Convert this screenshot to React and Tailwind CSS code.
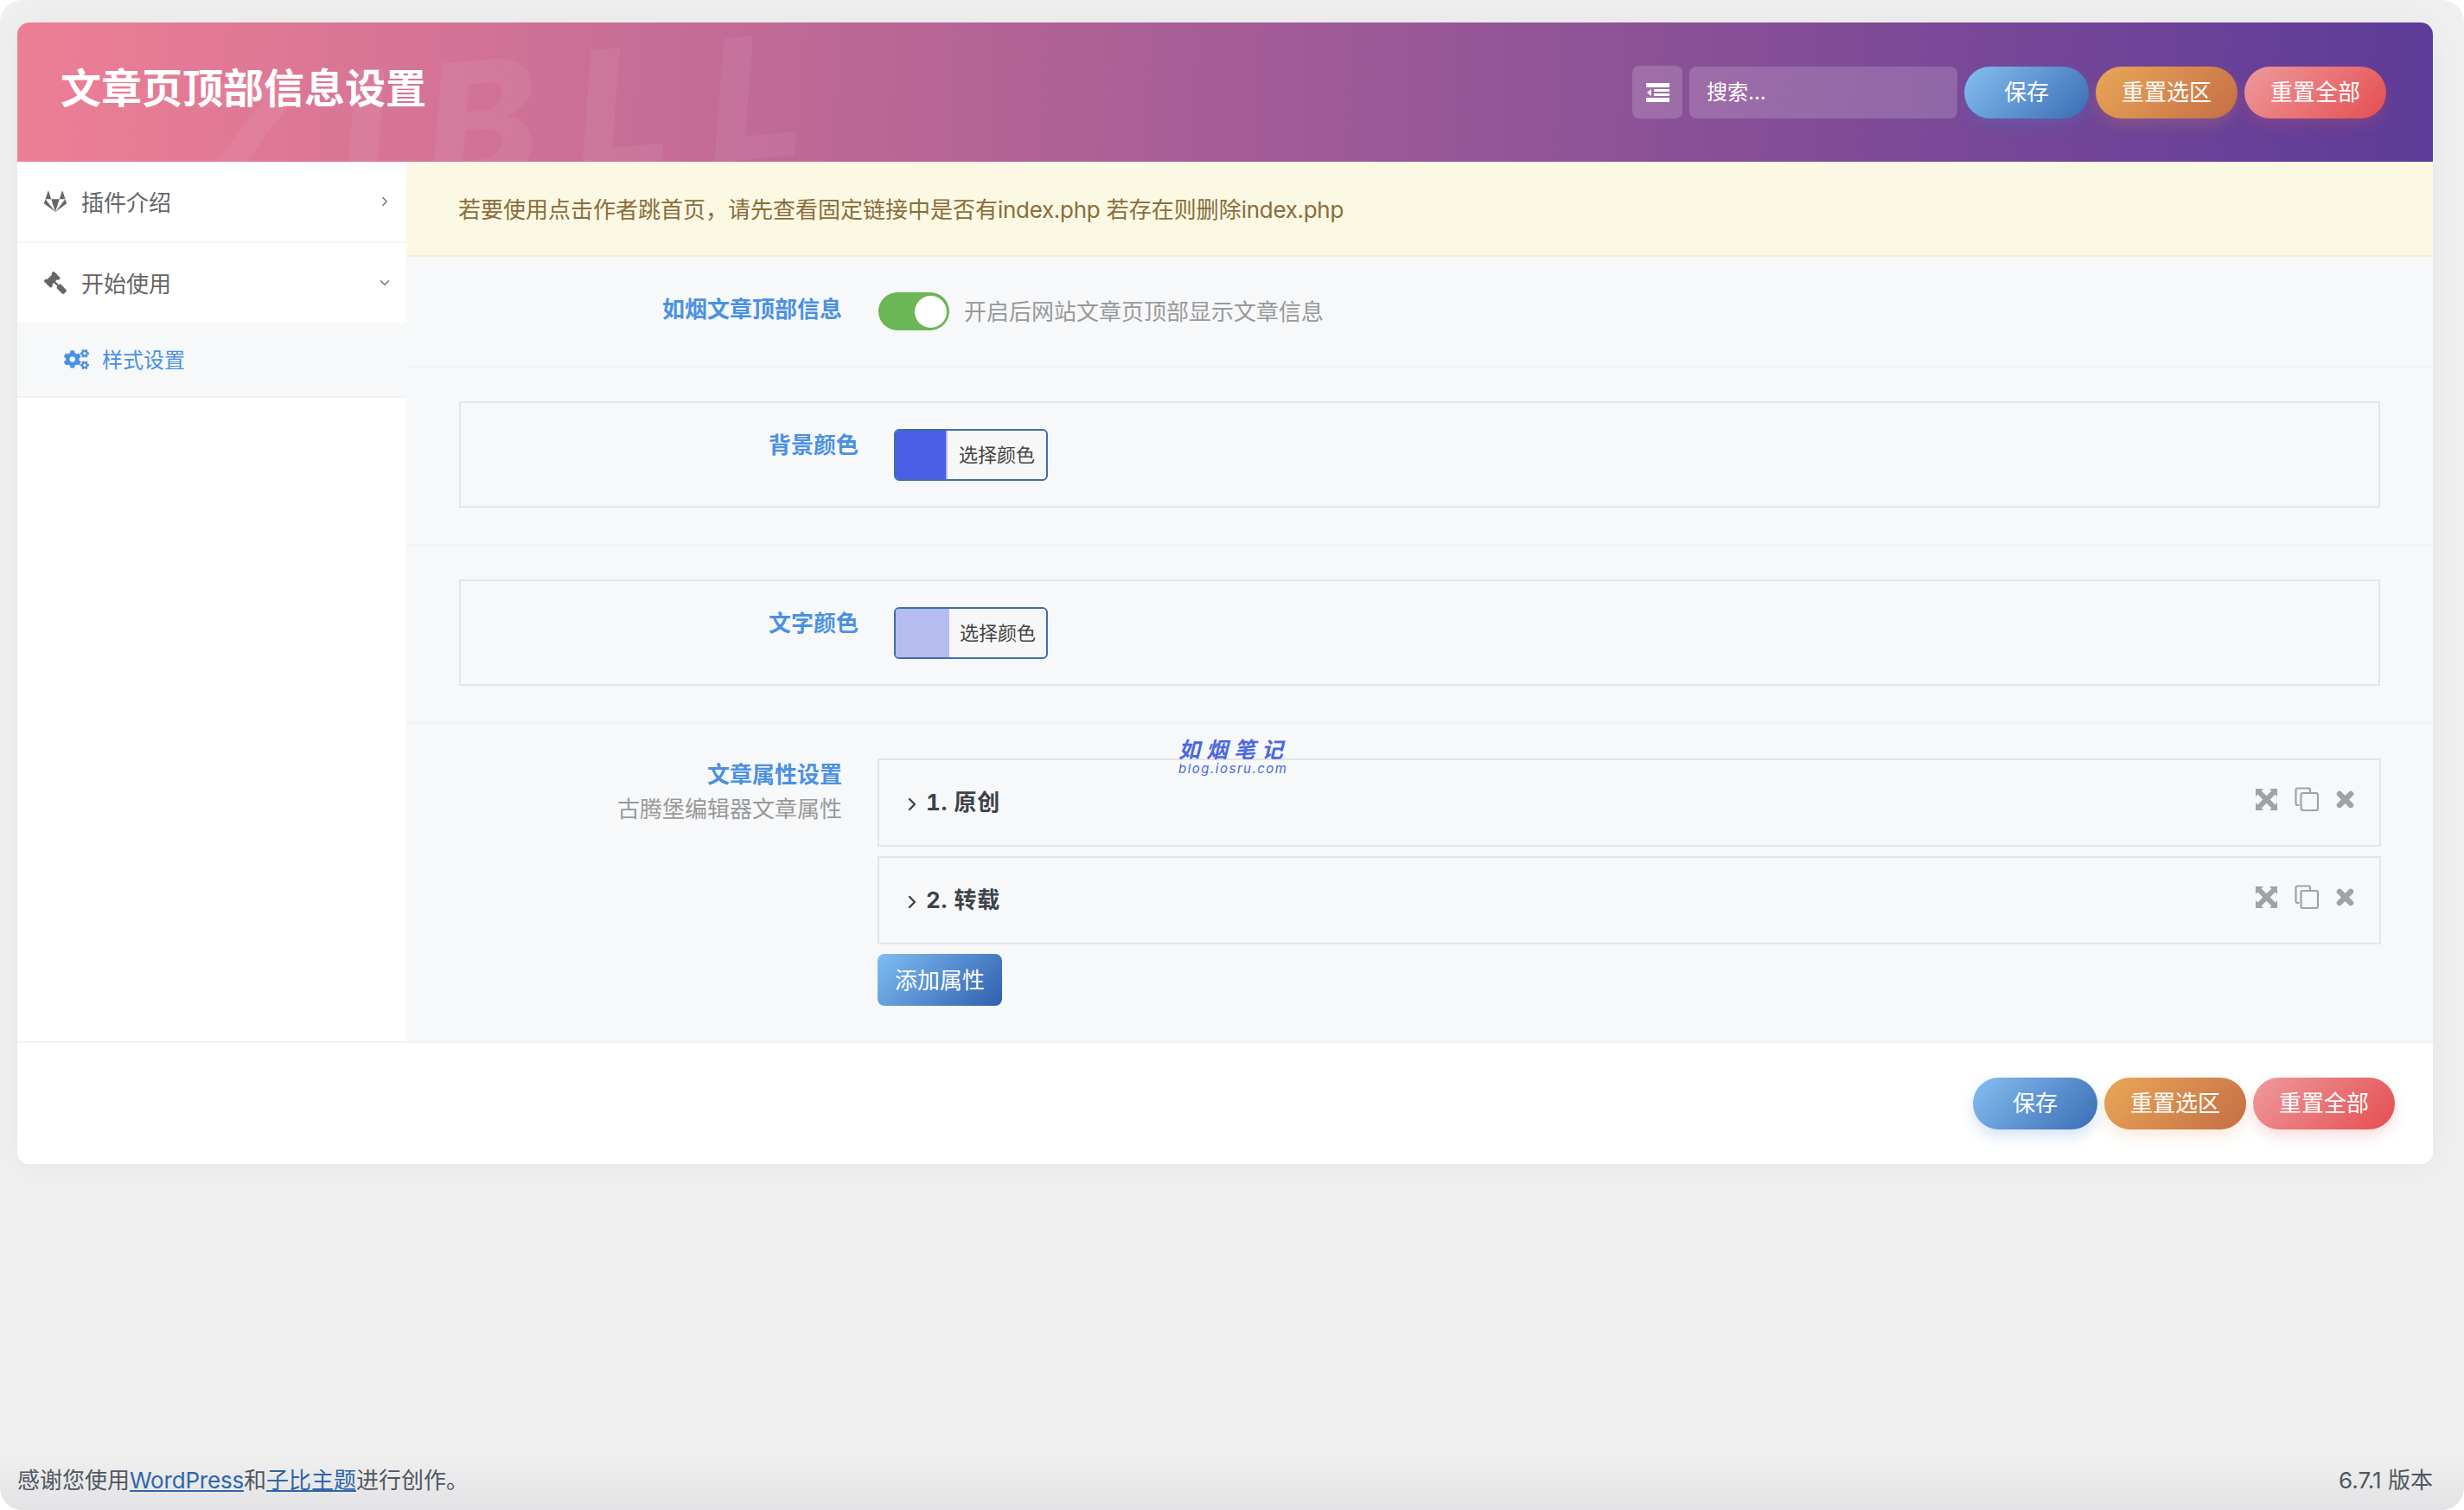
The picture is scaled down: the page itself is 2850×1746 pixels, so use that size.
import React from 'react';
import { ChevronRight, ChevronDown } from 'lucide-react';
import { FaGitlab, FaGavel, FaCogs } from 'react-icons/fa';

const actionBtn = 'h-[60px] rounded-[30px] text-white text-[26px] leading-[60px] text-center';

const ActionButtons = () => (
  <div className="flex gap-[8px]">
    <button className={`${actionBtn} w-[144px] bg-[linear-gradient(135deg,#85bff0,#3a6cb4)] shadow-[0_8px_16px_rgba(70,130,210,0.22)]`}>保存</button>
    <button className={`${actionBtn} w-[164px] bg-[linear-gradient(135deg,#e9a757,#c56e46)] shadow-[0_8px_16px_rgba(225,150,80,0.2)]`}>重置选区</button>
    <button className={`${actionBtn} w-[164px] bg-[linear-gradient(135deg,#ee9a9c,#e54e50)] shadow-[0_8px_16px_rgba(225,90,90,0.2)]`}>重置全部</button>
  </div>
);

const OutdentIcon = () => (
  <svg width="27" height="22" viewBox="0 0 27 22" fill="#fff">
    <rect width="27" height="5" />
    <rect x="9" y="7" width="18" height="3" />
    <rect x="9" y="12" width="18" height="3" />
    <path d="M1 11l5-4v8z" />
    <rect y="17" width="27" height="5" />
  </svg>
);

const ExpandIcon = () => (
  <svg width="25" height="25" viewBox="0 0 25 25" fill="#a0a2a5">
    <path d="M0 0h9L6.6 2.4 12.5 8.3 18.4 2.4 16 0h9v9l-2.4-2.4-5.9 5.9 5.9 5.9L25 16v9h-9l2.4-2.4-5.9-5.9-5.9 5.9L9 25H0v-9l2.4 2.4 5.9-5.9-5.9-5.9L0 9z" />
  </svg>
);

const CloseIcon = () => (
  <svg width="21" height="21" viewBox="0 0 21 21" fill="none" stroke="#a0a2a5" strokeWidth="6.5" strokeLinecap="round">
    <path d="M4 4l13 13M17 4L4 17" />
  </svg>
);

const CopyIcon = () => (
  <svg width="28" height="28" viewBox="0 0 28 28" fill="none" stroke="#a0a2a5" strokeWidth="2.2">
    <path d="M5.5 21H3.5a2 2 0 0 1-2-2V3.5a2 2 0 0 1 2-2H16a2 2 0 0 1 2 2v2.5" />
    <rect x="7.5" y="7" width="19.5" height="20" rx="2" />
  </svg>
);

const ColorBox = ({ label, swatch }) => (
  <div className="h-[206px] border-t-2 border-[#f1f2f3] px-[61px] pt-[39px]">
    <div className="h-[123px] border-2 border-[#e3e5e7] flex items-start pt-[30px]">
      <div className="w-[460px] text-right text-[26px] font-bold leading-[36px] text-[#4a90e2] pt-[1px]">{label}</div>
      <div className="ml-[41px] w-[178px] h-[60px] rounded-[6px] border-2 border-[#3f6fa8] flex overflow-hidden bg-[#f7f7f7]">
        {swatch}
        <div className="flex-1 text-center text-[22px] leading-[56px] text-[#444]">选择颜色</div>
      </div>
    </div>
  </div>
);

const GroupItem = ({ title }) => (
  <div className="h-[102px] border-2 border-[#e3e5e7] flex items-start justify-between pl-[29px] pr-[29px] pt-[31px]">
    <div className="flex items-center text-[26px] font-bold leading-[36px] text-[#3c434a]">
      <ChevronRight size={24} strokeWidth={2.4} className="mr-[4px] mt-[4px] -ml-[3px]" />
      <span className="tracking-[0.6px] tabular-nums">{title}</span>
    </div>
    <div className="flex items-center">
      <ExpandIcon />
      <span className="ml-[20px]"><CopyIcon /></span>
      <span className="ml-[20px]"><CloseIcon /></span>
    </div>
  </div>
);

export default function App() {
  return (
    <div className="bg-white">
      <div className="relative h-[1746px] rounded-[26px] flex flex-col bg-[linear-gradient(to_bottom,#f0f0f1_96%,#e3e3e5)] font-[Inter,'Noto_Sans_CJK_SC',sans-serif] text-[#3c434a]">
        {/* card */}
        <div className="relative ml-[20px] mr-[36px] mt-[26px] h-[1320px] rounded-[14px] bg-white shadow-[0_0_40px_rgba(0,0,0,0.05)] flex flex-col overflow-hidden">
          {/* header */}
          <div className="relative h-[161px] shrink-0 overflow-hidden flex items-center justify-between pl-[50px] pr-[54px] bg-[linear-gradient(92deg,#ed7f95,#5d3b98)]">
            <div className="absolute left-[195px] top-[14px] text-[195px] font-extrabold italic leading-none tracking-[44px] text-white/[0.06] -rotate-[5deg] select-none" aria-hidden="true">ZIBLL</div>
            <h1 className="relative text-[47px] font-bold leading-[60px] text-white pb-[9px]">文章页顶部信息设置</h1>
            <div className="relative flex items-center gap-[8px]">
              <div className="w-[58px] h-[61px] rounded-[8px] bg-white/[0.17] flex items-center justify-center">
                <OutdentIcon />
              </div>
              <input
                placeholder="搜索..."
                className="w-[310px] h-[60px] rounded-[8px] bg-white/[0.17] px-[20px] text-[24px] text-white placeholder:text-white outline-none"
              />
              <ActionButtons />
            </div>
          </div>

          <div className="flex-1 flex min-h-0">
            {/* sidebar */}
            <div className="w-[450px] shrink-0 bg-white">
              <div className="h-[94px] border-b-2 border-[#f3f4f5] flex items-center pl-[31px] pr-[16px] text-[#666] text-[26px]">
                <FaGitlab size={26} />
                <span className="ml-[17px] flex-1 pt-[2px]">插件介绍</span>
                <ChevronRight size={18} strokeWidth={1.6} />
              </div>
              <div className="h-[92px] flex items-center pl-[31px] pr-[16px] text-[#666] text-[26px]">
                <FaGavel size={26} className="-scale-x-100" />
                <span className="ml-[17px] flex-1 pt-[2px]">开始使用</span>
                <ChevronDown size={18} strokeWidth={1.6} />
              </div>
              <div className="h-[87px] bg-[#f6f8fa] border-b-2 border-[#f1f2f3] flex items-center pl-[54px] text-[#4a90e2] text-[24px]">
                <FaCogs size={29} />
                <span className="ml-[15px] pt-[2px]">样式设置</span>
              </div>
            </div>

            {/* main */}
            <div className="flex-1 bg-[#f6f8fa] flex flex-col">
              <div className="h-[110px] bg-[#fbf8e3] border-b-2 border-[#f9ecd4] pl-[60px] pt-[2px] flex items-center text-[26px] text-[#8a6d3b]">
                <div>
                  若要使用点击作者跳首页，请先查看固定链接中是否有<span className="tracking-[-0.3px]">index.php</span> 若存在则删除<span className="tracking-[-0.3px]">index.php</span>
                </div>
              </div>

              <div className="h-[126px] flex items-start pl-[61px] pt-[41px]">
                <div className="w-[443px] pt-[2px] text-right text-[26px] font-bold leading-[36px] text-[#4a90e2]">如烟文章顶部信息</div>
                <div className="ml-[42px] w-[82px] h-[44px] rounded-[22px] bg-[#6bb655] flex items-center justify-end pr-[3px]">
                  <div className="w-[37px] h-[37px] rounded-full bg-white" />
                </div>
                <div className="ml-[17px] text-[26px] leading-[46px] text-[#999]">开启后网站文章页顶部显示文章信息</div>
              </div>

              <ColorBox label="背景颜色" swatch={<div className="w-[60px] bg-[#4a5de6] border-r-[2px] border-[#b4bcf0]" />} />
              <ColorBox label="文字颜色" swatch={<div className="w-[62px] bg-[#b4bcf0]" />} />

              <div className="flex-1 border-t-2 border-[#f1f2f3] flex items-start pl-[61px] pr-[60px] pt-[40px]">
                <div className="w-[443px] pt-[1px] text-right">
                  <div className="text-[26px] font-bold leading-[36px] text-[#4a90e2]">文章属性设置</div>
                  <div className="mt-[2px] text-[26px] leading-[40px] text-[#999]">古腾堡编辑器文章属性</div>
                </div>
                <div className="ml-[41px] flex-1 flex flex-col">
                  <GroupItem title="1. 原创" />
                  <div className="h-[11px]" />
                  <GroupItem title="2. 转载" />
                  <button className="mt-[11px] w-[144px] h-[60px] rounded-[8px] text-white text-[26px] bg-[linear-gradient(135deg,#7fbdf2,#2f5fae)]">添加属性</button>
                </div>
              </div>
            </div>
          </div>

          {/* card footer */}
          <div className="h-[142px] shrink-0 border-t-2 border-[#f1f2f3] bg-white flex justify-end items-start pt-[40px] pr-[44px]">
            <ActionButtons />
          </div>

          {/* pasted watermark */}
          <div className="absolute left-[1343px] top-[829px] w-[130px] italic text-[#4a68e0] leading-none">
            <div className="text-[25px] font-bold tracking-[7px] whitespace-nowrap">如烟笔记</div>
            <div className="mt-[1px] text-[15px] tracking-[1.5px] whitespace-nowrap">blog.iosru.com</div>
          </div>
        </div>

        {/* wp footer */}
        <div className="mt-auto pl-[20px] pr-[36px] pb-[14px] flex justify-between text-[26px] leading-[40px] text-[#50575e]">
          <div>
            感谢您使用<a className="text-[#2e66a8] underline underline-offset-2 tracking-[-0.2px]" href="#">WordPress</a>和<a className="text-[#2e66a8] underline underline-offset-2" href="#">子比主题</a>进行创作。
          </div>
          <div>6.7.1 版本</div>
        </div>
      </div>
    </div>
  );
}
